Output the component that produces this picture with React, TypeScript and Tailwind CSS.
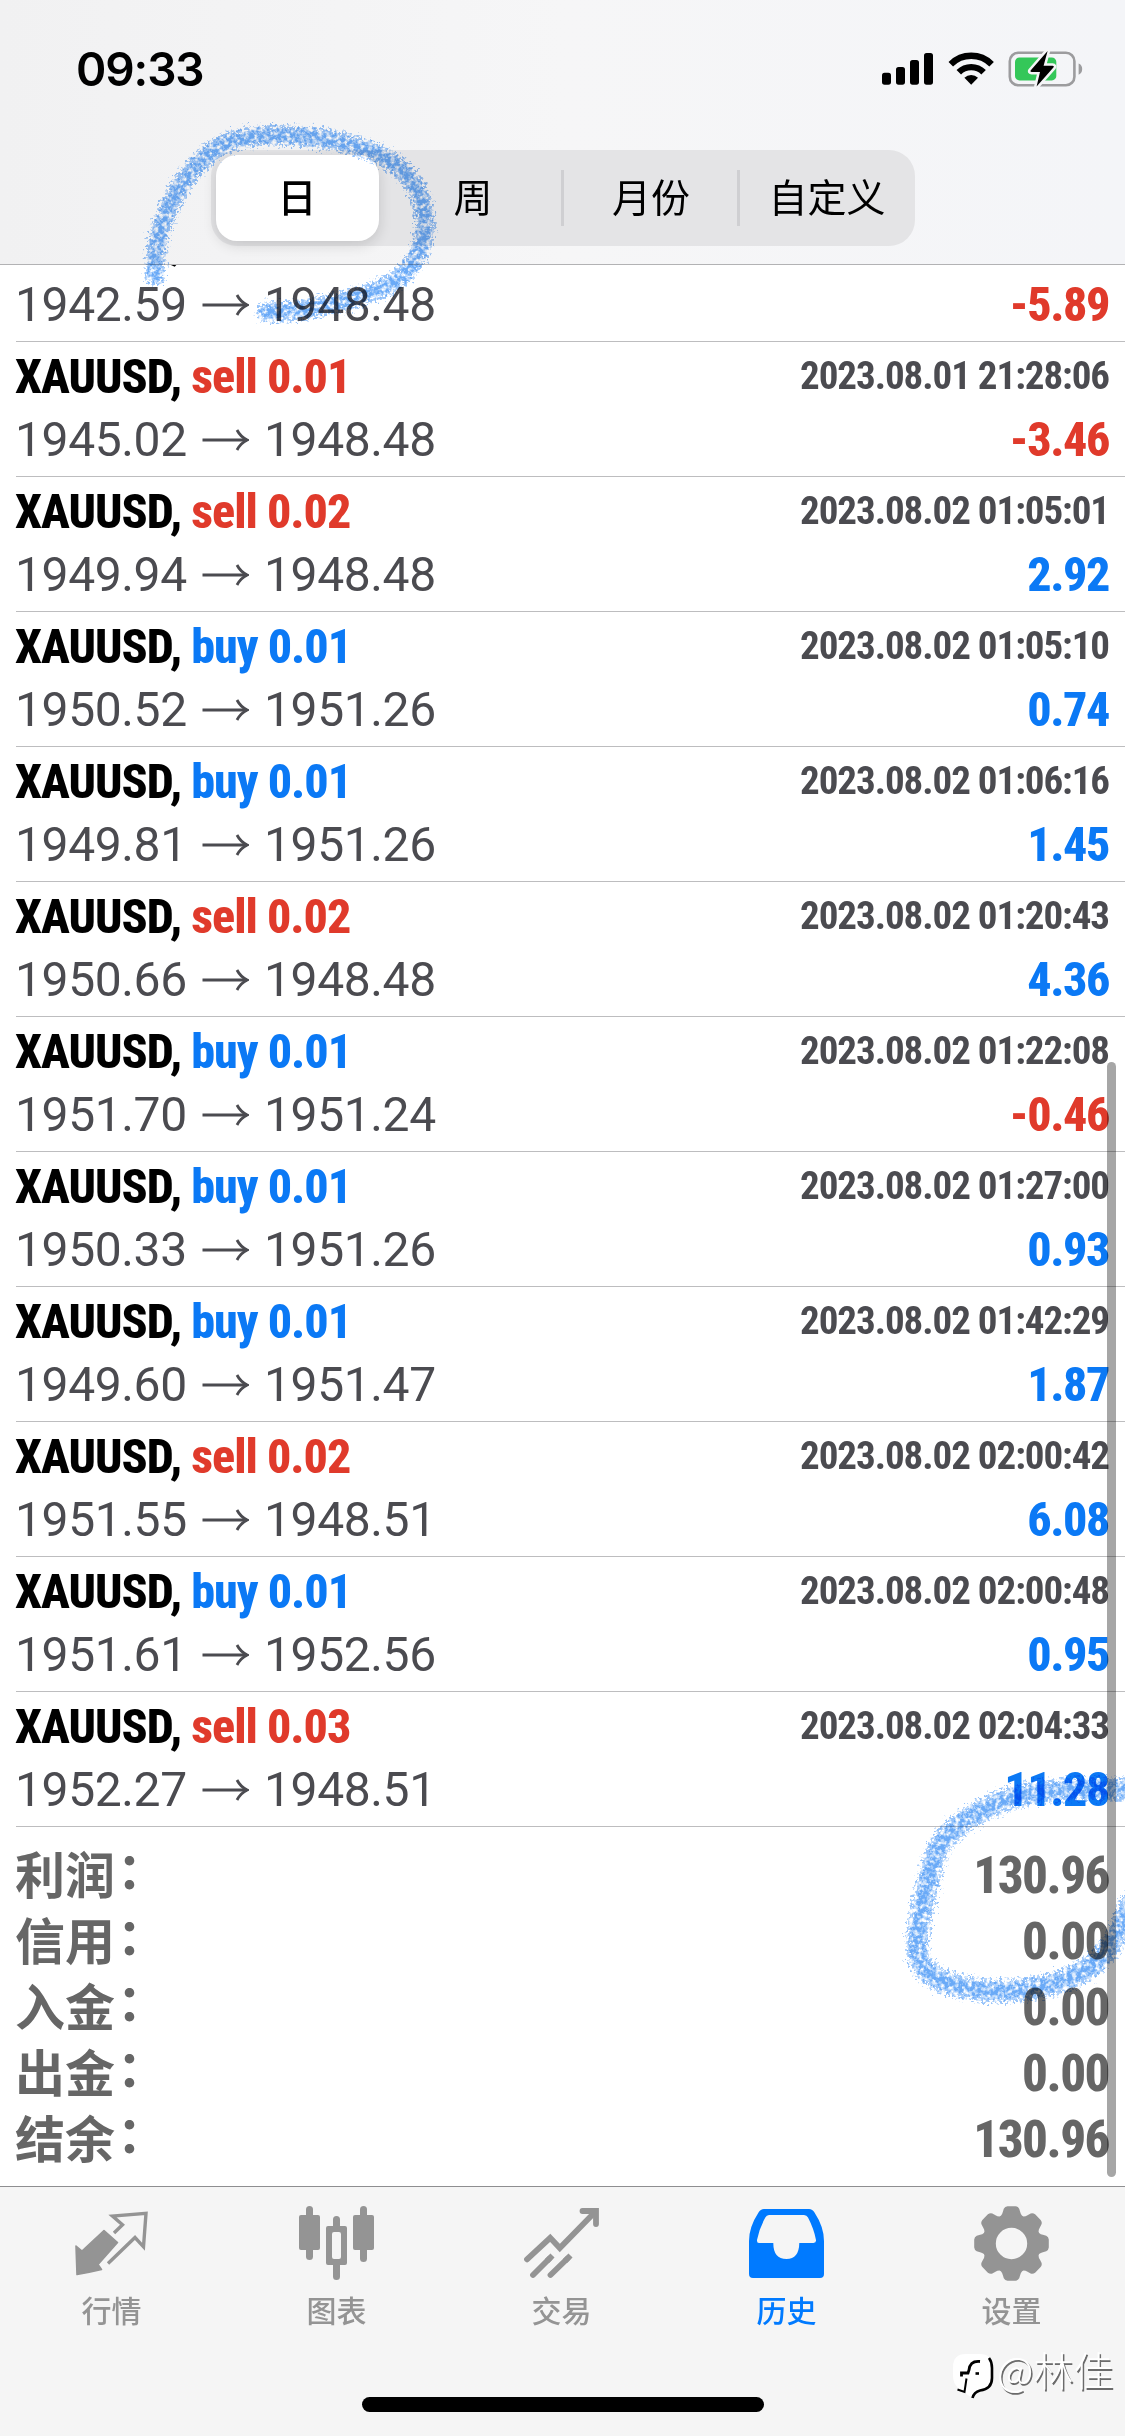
import React from "react";

type Deal = {
  side: "buy" | "sell";
  volume: string;
  open: string;
  close: string;
  time: string;
  profit: string;
};

const deals: Deal[] = [
  { side: "sell", volume: "0.01", open: "1942.59", close: "1948.48", time: "2023.08.01 21:20:18", profit: "-5.89" },
  { side: "sell", volume: "0.01", open: "1945.02", close: "1948.48", time: "2023.08.01 21:28:06", profit: "-3.46" },
  { side: "sell", volume: "0.02", open: "1949.94", close: "1948.48", time: "2023.08.02 01:05:01", profit: "2.92" },
  { side: "buy", volume: "0.01", open: "1950.52", close: "1951.26", time: "2023.08.02 01:05:10", profit: "0.74" },
  { side: "buy", volume: "0.01", open: "1949.81", close: "1951.26", time: "2023.08.02 01:06:16", profit: "1.45" },
  { side: "sell", volume: "0.02", open: "1950.66", close: "1948.48", time: "2023.08.02 01:20:43", profit: "4.36" },
  { side: "buy", volume: "0.01", open: "1951.70", close: "1951.24", time: "2023.08.02 01:22:08", profit: "-0.46" },
  { side: "buy", volume: "0.01", open: "1950.33", close: "1951.26", time: "2023.08.02 01:27:00", profit: "0.93" },
  { side: "buy", volume: "0.01", open: "1949.60", close: "1951.47", time: "2023.08.02 01:42:29", profit: "1.87" },
  { side: "sell", volume: "0.02", open: "1951.55", close: "1948.51", time: "2023.08.02 02:00:42", profit: "6.08" },
  { side: "buy", volume: "0.01", open: "1951.61", close: "1952.56", time: "2023.08.02 02:00:48", profit: "0.95" },
  { side: "sell", volume: "0.03", open: "1952.27", close: "1948.51", time: "2023.08.02 02:04:33", profit: "11.28" },
];

const totals = [
  ["利润", "130.96"],
  ["信用", "0.00"],
  ["入金", "0.00"],
  ["出金", "0.00"],
  ["结余", "130.96"],
];

function StatusIcons() {
  return (
    <svg className="h-[40px] w-[204px]" viewBox="880 49 204 40">
      <g fill="#000">
        <rect x="882" y="72.7" width="9" height="12" rx="2.6" />
        <rect x="896" y="67" width="9" height="17.7" rx="2.6" />
        <rect x="910" y="60" width="9" height="24.7" rx="2.6" />
        <rect x="924" y="53" width="9" height="31.7" rx="2.6" />
        <path d="M971.2 84.7 L964.4 77.8 A9.6 9.6 0 0 1 978 77.8 Z" />
      </g>
      <g fill="none" stroke="#000" strokeWidth="6.4">
        <path d="M958.8 72.2 A17.6 17.6 0 0 1 983.6 72.2" />
        <path d="M950.8 64.2 A28.9 28.9 0 0 1 991.6 64.2" />
      </g>
      <rect x="1009.8" y="52.8" width="64.6" height="32.4" rx="8.5" fill="none" stroke="#9c9c9e" strokeWidth="2.6" />
      <path d="M1078.6 63.5 C1083.4 65 1083.4 73.2 1078.6 74.7 Z" fill="#9c9c9e" />
      <rect x="1015" y="57.4" width="41.3" height="23" rx="4.5" fill="#34c759" />
      <path
        d="M1047.6 51 L1030.6 70.6 Q1029.8 72 1031.6 72 L1040 72 L1036.6 86.6 L1053.4 67.6 Q1054.6 65.8 1052.6 65.8 L1043.6 65.8 Z"
        fill="#000"
        stroke="#f5f5f7"
        strokeWidth="5"
        strokeLinejoin="round"
        paintOrder="stroke"
      />
    </svg>
  );
}

function Arrow() {
  return (
    <svg className="h-[24px] w-[47px]" viewBox="0 0 47 24" fill="none" stroke="#4b4b50" strokeWidth="2.8">
      <path d="M0.5 12 H45" />
      <path d="M35 2 Q38.5 8.8 45.2 12 Q38.5 15.2 35 22" />
    </svg>
  );
}

const condensed = "[font-stretch:75%] leading-none";

function DealRow({ d }: { d: Deal }) {
  const side = d.side === "buy" ? "text-[#0b79f5]" : "text-[#e03a2b]";
  const profit = d.profit.startsWith("-") ? "text-[#e03a2b]" : "text-[#0b79f5]";
  return (
    <li className="ml-4 flex h-[135px] shrink-0 flex-col border-b border-[#bdbdbf] pt-[11px] pr-4">
      <div className="flex items-start justify-between">
        <div className={`${condensed} -ml-px text-[48px] font-extrabold tracking-[-1px] whitespace-pre`}>
          <span className="text-black">XAUUSD, </span>
          <span className={side}>{d.side} {d.volume}</span>
        </div>
        <div className={`${condensed} mt-[4px] text-[39px] font-bold tracking-[-1.05px] text-[#4b4b50]`}>{d.time}</div>
      </div>
      <div className="mt-[15px] flex items-center justify-between leading-none">
        <div className="-ml-px flex items-center text-[48px] tracking-[-0.4px] text-[#4b4b50]">
          <span className="w-[187px]">{d.open}</span>
          <Arrow />
          <span className="ml-[15px]">{d.close}</span>
        </div>
        <div className={`${condensed} ${profit} text-[48px] font-extrabold tracking-[-1.4px]`}>{d.profit}</div>
      </div>
    </li>
  );
}

function gearPath() {
  const pts: string[] = [];
  const at = (r: number, deg: number) => {
    const a = ((deg - 90) * Math.PI) / 180;
    return `${(36.5 + r * Math.cos(a)).toFixed(2)} ${(37.5 + r * Math.sin(a)).toFixed(2)}`;
  };
  for (let i = 0; i < 8; i++) {
    const c = i * 45;
    pts.push(`L${at(29.6, c - 21)}`, `Q${at(30.5, c - 17.5)} ${at(32.6, c - 15.5)}`, `L${at(35.6, c - 12.5)}`);
    pts.push(`Q${at(37.6, c - 10)} ${at(37.5, c - 6)}`, `L${at(37.5, c + 6)}`);
    pts.push(`Q${at(37.6, c + 10)} ${at(35.6, c + 12.5)}`, `L${at(32.6, c + 15.5)}`, `Q${at(30.5, c + 17.5)} ${at(29.6, c + 21)}`);
  }
  return "M" + pts.join(" ").slice(1) + "Z M20.8 37.5 a15.7 15.7 0 1 0 31.4 0 a15.7 15.7 0 1 0 -31.4 0Z";
}

const tabs: { label: string; active?: boolean; icon: React.ReactNode }[] = [
  {
    label: "行情",
    icon: (
      <>
        <path d="M1 40 L7 45 L29 24.5 L42.5 36.5 L23 58.5 L26.5 63.5 Q14 66.5 2 68.5 Z" fill="currentColor" stroke="currentColor" strokeWidth="1.6" strokeLinejoin="round" />
        <path d="M39 27 L47.5 18.8 L37.5 10 L71 7.3 L68.5 40.8 L60 31.5 L33 57.5" fill="none" stroke="currentColor" strokeWidth="3.4" />
      </>
    ),
  },
  {
    label: "图表",
    icon: (
      <g fill="currentColor">
        <rect x="-1" y="9" width="21" height="35" rx="2" />
        <rect x="6" y="0" width="7" height="54" rx="3.5" />
        <path fillRule="evenodd" d="M28 20 H45 Q47 20 47 22 V57 Q47 59 45 59 H28 Q26 59 26 57 V22 Q26 20 28 20Z M34 26 Q32 26 32 28 V51 Q32 53 34 53 H39 Q41 53 41 51 V28 Q41 26 39 26Z" />
        <path d="M33 21 V13.5 a3.5 3.5 0 0 1 7 0 V21Z M33 58 V70.5 a3.5 3.5 0 0 0 7 0 V58Z" />
        <rect x="53" y="9" width="21" height="35" rx="2" />
        <rect x="60" y="0" width="7" height="56" rx="3.5" />
      </g>
    ),
  },
  {
    label: "交易",
    icon: (
      <g fill="none" stroke="currentColor" strokeWidth="5.8" strokeLinecap="round">
        <path d="M2 53.3 L25.2 31.8 L34.8 42 L70 6" strokeLinejoin="miter" />
        <path d="M57.5 5 L71 5 L71 18" />
        <path d="M8 69 L24.5 52.5 M25.5 69 L42.5 52.5" />
        <path d="M22 55 L27.5 49.5 M40 55 L45.5 49.5" strokeLinecap="butt" />
      </g>
    ),
  },
  {
    label: "历史",
    active: true,
    icon: (
      <path
        fill="currentColor"
        fillRule="evenodd"
        d="M14 3 H59 Q62.5 3 64.5 6.5 Q74 21 74 35 V68 Q74 72 70 72 H3 Q-1 72 -1 68 V35 Q-1 21 8.5 6.5 Q10.5 3 14 3Z M19 9 Q16.5 9 15.3 11.5 Q9 23 7 34 Q6.7 37 9 37 H23.3 Q23.3 53 36.5 53 Q49 53 49.3 37 H63.5 Q66.3 37 66 34 Q64 23 58 11.5 Q56.8 9 54 9Z"
      />
    ),
  },
  { label: "设置", icon: <path fill="currentColor" fillRule="evenodd" d={gearPath()} /> },
];

function Crayon({ d, id, seed, width }: { d: string; id: string; seed: number; width: number }) {
  return (
    <>
      <filter id={id} x="-20%" y="-20%" width="140%" height="140%" colorInterpolationFilters="sRGB">
        <feTurbulence type="fractalNoise" baseFrequency="0.4" numOctaves="2" seed={seed} result="n" />
        <feDisplacementMap in="SourceGraphic" in2="n" scale="18" xChannelSelector="R" yChannelSelector="G" result="rough" />
        <feTurbulence type="fractalNoise" baseFrequency="0.22" numOctaves="3" seed={seed + 4} result="g" />
        <feColorMatrix in="g" type="matrix" values="0 0 0 0 0  0 0 0 0 0  0 0 0 0 0  3 0 0 0 -0.7" result="grain" />
        <feComposite in="rough" in2="grain" operator="in" />
        <feGaussianBlur stdDeviation="0.7" />
      </filter>
      <g filter={`url(#${id})`} fill="none" stroke="#3f91f6" strokeLinecap="round" strokeLinejoin="round">
        <path d={d} strokeWidth={width} opacity="0.55" />
        <path d={d} strokeWidth={width * 0.55} opacity="0.5" />
      </g>
    </>
  );
}

export default function App() {
  return (
    <div className="relative flex h-[2436px] w-[1125px] flex-col overflow-hidden bg-white font-[Roboto,'Noto_Sans_CJK_SC',sans-serif]">
      <header className="z-10 flex h-[265px] shrink-0 flex-col border-b border-[#b2b2b4] bg-linear-to-r from-[#f1f1f2] via-[#f6f6f7] to-[#f4f5f8]">
        <div className="flex h-[150px] items-start justify-between pt-[46px] pr-[41px] pl-[76px]">
          <div className="font-[Inter,sans-serif] text-[46px] leading-[46px] font-semibold tracking-[-1.1px] text-black">09:33</div>
          <div className="pt-[3px]"><StatusIcons /></div>
        </div>
        <div className="mx-auto grid h-24 w-[704px] grid-cols-4 items-center rounded-[26px] bg-[#e4e4e6] text-center text-[39px] leading-none text-black">
          <div className="ml-[5px] flex h-[86px] w-[163px] items-center justify-center rounded-[21px] bg-white font-medium shadow-[0_4px_14px_rgba(0,0,0,0.14)]">
            <span className="pt-[3px]">日</span>
          </div>
          <div className="pt-[3px] pr-[3px]">周</div>
          <div className="-ml-[2px] flex h-[56px] items-center justify-center border-l-[3px] border-[#cfcfd2] pt-[3px]">月份</div>
          <div className="-ml-[2px] flex h-[56px] items-center justify-center border-l-[3px] border-[#cfcfd2] pt-[3px]">自定义</div>
        </div>
      </header>

      <main className="flex min-h-0 flex-1 flex-col overflow-hidden">
        <ul className="-mt-[58px] flex shrink-0 flex-col">
          {deals.map((d) => (
            <DealRow key={d.open + d.time} d={d} />
          ))}
        </ul>
        <dl className="flex flex-col pt-[15px] pr-4 pl-[15px]">
          {totals.map(([label, value]) => (
            <div key={label} className="flex h-[66px] items-center justify-between leading-none text-[#666]">
              <dt className="flex pb-[7px] font-['Noto_Sans_CJK_SC',sans-serif] text-[50px] font-bold">
                {label}
                <span className="-mt-[5px] ml-[2px]">：</span>
              </dt>
              <dd className={`${condensed} mt-px text-[51px] font-extrabold tracking-[-1.5px]`}>{value}</dd>
            </div>
          ))}
        </dl>
      </main>

      <footer className="flex h-[250px] shrink-0 flex-col border-t border-[#8e8e90] bg-[#f5f5f5]">
        <nav className="grid h-[210px] grid-cols-5">
          {tabs.map((t) => (
            <div key={t.label} className={`flex flex-col items-center pt-[19px] pr-[2px] ${t.active ? "text-[#007aff]" : "text-[#949494]"}`}>
              <svg className="h-[75px] w-[75px]" viewBox="-1 0 75 75">{t.icon}</svg>
              <span className="mt-[16px] text-[30px] leading-[30px] font-medium">{t.label}</span>
            </div>
          ))}
        </nav>
        <div className="mx-auto h-[15px] w-[402px] rounded-full bg-black" />
      </footer>

      <div className="absolute top-[1062px] left-[1107px] h-[1115px] w-[9px] rounded-full bg-black/35" />

      <svg className="pointer-events-none absolute inset-0 z-20 mix-blend-multiply" width="1125" height="2436" viewBox="0 0 1125 2436">
        <Crayon
          id="crayon-a"
          seed={3}
          width={19}
          d="M155 276 C154 250 160 222 176 194 C192 166 216 141 250 137 C290 132 340 138 378 154 C408 168 424 192 425 222 C425 252 410 276 380 289 C345 303 300 313 266 312"
        />
        <Crayon
          id="crayon-b"
          seed={9}
          width={22}
          d="M1135 1791 C1100 1787 1050 1788 1015 1797 C985 1806 945 1828 935 1855 C928 1885 917 1920 917 1950 C920 1978 950 1988 990 1991 C1030 1992 1070 1984 1095 1963 C1112 1948 1122 1930 1130 1905"
        />
      </svg>

      <div className="absolute top-[2350px] left-[952px] flex items-start">
        <svg className="h-[52px] w-[44px]" viewBox="0 0 44 52">
          <path d="M14 4 H28 Q40 4 40 17 V28 Q40 40 28 41 Q22 42 20 48 Q12 42 6 38 Q1 33 1 26 V17 Q1 4 14 4Z" fill="#fff" />
          <path d="M37 8 Q40 12 40 18 V28 Q40 39 28 40.5 Q22 42 20.5 48" fill="none" stroke="#000" strokeWidth="2.6" />
          <path d="M28 11.5 Q18 10.5 17 20 L16 23 H9.5 V26.5" fill="none" stroke="#000" strokeWidth="2.8" />
          <path d="M14.5 28.5 L12.5 42 L5.5 39.5" fill="none" stroke="#000" strokeWidth="2" />
          <path d="M23.5 23.5 H27" stroke="#000" strokeWidth="2.6" />
        </svg>
        <span className="ml-px font-['Noto_Sans_CJK_SC',sans-serif] text-[40px] leading-[38px] font-light text-white [text-shadow:1.5px_1.5px_0_#6b6b6b]">@林佳</span>
      </div>
    </div>
  );
}
